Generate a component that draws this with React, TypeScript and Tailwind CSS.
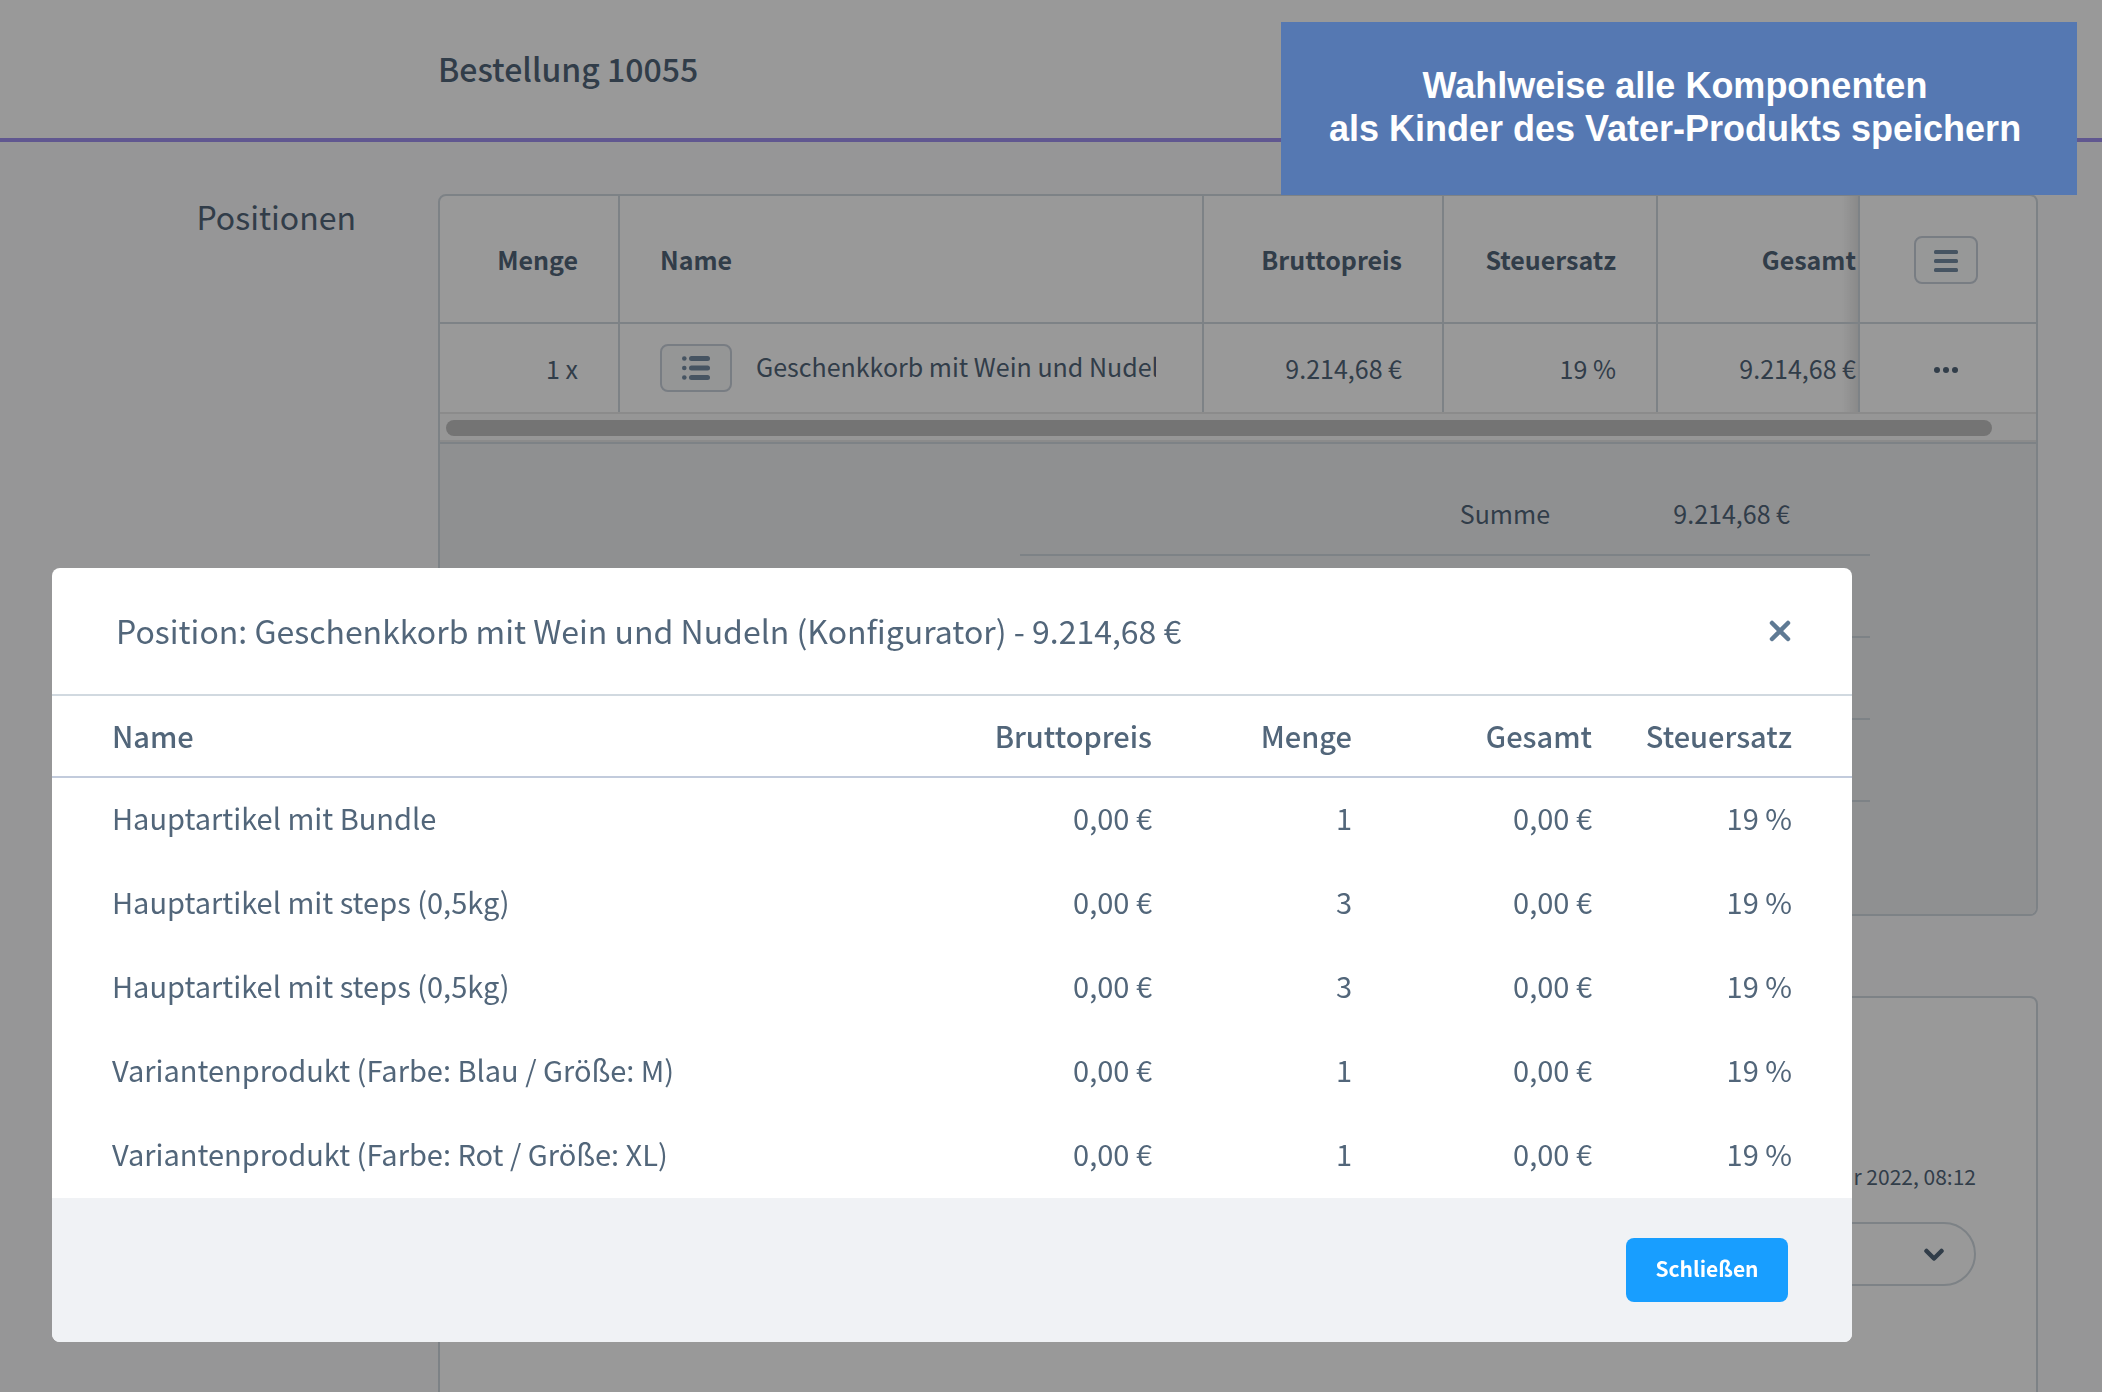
import { ReactNode } from "react";

const positions = [
  { name: "Hauptartikel mit Bundle", price: "0,00 €", quantity: 1, total: "0,00 €", tax: "19 %" },
  { name: "Hauptartikel mit steps (0,5kg)", price: "0,00 €", quantity: 3, total: "0,00 €", tax: "19 %" },
  { name: "Hauptartikel mit steps (0,5kg)", price: "0,00 €", quantity: 3, total: "0,00 €", tax: "19 %" },
  { name: "Variantenprodukt (Farbe: Blau / Größe: M)", price: "0,00 €", quantity: 1, total: "0,00 €", tax: "19 %" },
  { name: "Variantenprodukt (Farbe: Rot / Größe: XL)", price: "0,00 €", quantity: 1, total: "0,00 €", tax: "19 %" },
];

function ListIcon() {
  return (
    <svg width="28" height="24" viewBox="0 0 28 24" fill="#758ca3" aria-hidden="true">
      <circle cx="2.3" cy="2.5" r="2.3" />
      <circle cx="2.3" cy="12" r="2.3" />
      <circle cx="2.3" cy="21.5" r="2.3" />
      <rect x="7" y="0" width="21" height="5" rx="2.5" />
      <rect x="7" y="9.5" width="21" height="5" rx="2.5" />
      <rect x="7" y="19" width="21" height="5" rx="2.5" />
    </svg>
  );
}

function MenuIcon() {
  return (
    <svg width="24" height="22" viewBox="0 0 24 22" fill="#758ca3" aria-hidden="true">
      <rect x="0" y="0" width="24" height="4" rx="1.5" />
      <rect x="0" y="9" width="24" height="4" rx="1.5" />
      <rect x="0" y="18" width="24" height="4" rx="1.5" />
    </svg>
  );
}

function DotsIcon() {
  return (
    <svg width="24" height="6" viewBox="0 0 24 6" fill="#52667a" aria-hidden="true">
      <circle cx="3" cy="3" r="3" />
      <circle cx="12" cy="3" r="3" />
      <circle cx="21" cy="3" r="3" />
    </svg>
  );
}

function Header() {
  return (
    <header className="flex h-[142px] items-center border-b-4 border-[#a092f0] bg-white pb-0.5 pl-[438px]">
      <h1 className="text-[32px] leading-[48px] font-medium">Bestellung 10055</h1>
    </header>
  );
}

function Section({ title, children }: { title?: string; children: ReactNode }) {
  return (
    <section className="flex pr-16">
      <h2 className="w-[438px] shrink-0 pr-[82px] text-right text-[32px] leading-[44px]">{title}</h2>
      <div className="min-w-0 flex-1 overflow-hidden rounded-lg border-2 border-[#d1d9e0] bg-white">
        {children}
      </div>
    </section>
  );
}

function LineItems() {
  return (
    <div>
      <table className="w-full table-fixed border-separate border-spacing-0 text-right text-[25px] leading-9">
        <colgroup>
          <col className="w-[180px]" />
          <col />
          <col className="w-[240px]" />
          <col className="w-[214px]" />
          <col className="w-[202px]" />
          <col className="w-[176px]" />
        </colgroup>
        <thead>
          <tr className="h-32 [&>th]:border-b-2 [&>th]:border-[#d1d9e0]">
            <th className="border-r-2 pr-10 font-bold">Menge</th>
            <th className="border-r-2 pl-10 text-left font-bold">Name</th>
            <th className="border-r-2 pr-10 font-bold">Bruttopreis</th>
            <th className="border-r-2 pr-10 font-bold">Steuersatz</th>
            <th className="border-r-2 bg-linear-to-l from-black/10 to-transparent to-8% pr-0.5 font-bold">Gesamt</th>
            <th className="pt-0.5 pr-1 text-center">
              <button
                aria-label="Spalten"
                className="inline-flex h-12 w-16 items-center justify-center rounded-lg border-2 border-[#c9d0da] bg-[#fcfdfe] pt-0.5 align-middle"
              >
                <MenuIcon />
              </button>
            </th>
          </tr>
        </thead>
        <tbody>
          <tr className="h-[88px] [&>td]:border-[#d1d9e0]">
            <td className="border-r-2 pr-10">1 x</td>
            <td className="border-r-2 pr-[46px] pl-10">
              <div className="flex items-center gap-6">
                <button
                  aria-label="Positionen anzeigen"
                  className="flex h-12 w-[72px] shrink-0 items-center justify-center rounded-lg border-2 border-[#c9d0da] bg-[#f9fafb]"
                >
                  <ListIcon />
                </button>
                <span className="overflow-hidden pb-1 whitespace-nowrap">Geschenkkorb mit Wein und Nudeln</span>
              </div>
            </td>
            <td className="border-r-2 pr-10">9.214,68 €</td>
            <td className="border-r-2 pr-10">19 %</td>
            <td className="border-r-2 bg-linear-to-l from-black/10 to-transparent to-8% pr-0.5">9.214,68 €</td>
            <td className="pr-1 pb-1 text-center">
              <button aria-label="Aktionen" className="inline-flex p-2 align-middle">
                <DotsIcon />
              </button>
            </td>
          </tr>
        </tbody>
      </table>
      <div className="border-t-2 border-b-2 border-[#e8e8e8] bg-[#fafafa] pt-1.5 pr-11 pb-1 pl-1.5">
        <div className="h-4 rounded-full bg-[#c1c1c1]" />
      </div>
    </div>
  );
}

function Summary() {
  return (
    <div className="border-t-2 border-[#d1d9e0] bg-[#eef0f2] py-[30px] pr-[166px]">
      <dl className="ml-auto w-[850px] text-right text-[25px] leading-9">
        <div className="flex h-[82px] items-center border-b-2 border-[#d1d9e0] pr-20 pb-0.5">
          <dt className="flex-1">Summe</dt>
          <dd className="w-60">9.214,68 €</dd>
        </div>
        <div className="h-[82px] border-b-2 border-[#d1d9e0]" />
        <div className="h-[82px] border-b-2 border-[#d1d9e0]" />
        <div className="h-[82px] border-b-2 border-[#d1d9e0]" />
        <div className="h-[82px]" />
      </dl>
    </div>
  );
}

function OrderState() {
  return (
    <div className="flex flex-col items-end px-[60px] pt-[158px] pb-40">
      <p className="text-[21px] leading-10">r 2022, 08:12</p>
      <div className="relative mt-[26px] w-1/3">
        <select
          aria-label="Status"
          className="h-16 w-full appearance-none rounded-full border-2 border-[#d1d9e0] bg-white px-8 text-[21px]"
        />
        <svg
          className="pointer-events-none absolute top-[26px] right-8"
          width="20"
          height="14"
          viewBox="0 0 20 14"
          fill="none"
          stroke="#52667a"
          strokeWidth="4.5"
          strokeLinecap="round"
          strokeLinejoin="round"
          aria-hidden="true"
        >
          <path d="M2.5 3 10 10.5l7.5-7.5" />
        </svg>
      </div>
    </div>
  );
}

function PositionModal() {
  return (
    <div
      role="dialog"
      aria-labelledby="modal-title"
      className="fixed top-[568px] right-[250px] left-[52px] overflow-hidden rounded-lg bg-white"
    >
      <div className="flex h-32 items-center justify-between border-b-2 border-[#d1d9e0] pr-[52px] pl-16">
        <h3 id="modal-title" className="pb-0.5 text-[32px] leading-[48px]">
          Position: Geschenkkorb mit Wein und Nudeln (Konfigurator) - 9.214,68 €
        </h3>
        <button aria-label="Dialog schließen" className="p-2">
          <svg
            width="24"
            height="24"
            viewBox="0 0 24 24"
            stroke="#5f7a94"
            strokeWidth="4.5"
            strokeLinecap="round"
            aria-hidden="true"
          >
            <path d="M4 4l16 16M20 4 4 20" />
          </svg>
        </button>
      </div>
      <table className="w-full table-fixed border-separate border-spacing-0 text-right text-[29px] leading-10">
        <colgroup>
          <col />
          <col className="w-[200px]" />
          <col className="w-[200px]" />
          <col className="w-60" />
          <col className="w-[260px]" />
        </colgroup>
        <thead>
          <tr className="h-[82px] [&>th]:border-b-2 [&>th]:border-[#c2cbdc] [&>th]:pb-0.5 [&>th]:font-medium">
            <th className="pl-[60px] text-left">Name</th>
            <th>Bruttopreis</th>
            <th>Menge</th>
            <th>Gesamt</th>
            <th className="pr-[60px]">Steuersatz</th>
          </tr>
        </thead>
        <tbody>
          {positions.map((position, index) => (
            <tr key={index} className="h-[84px] [&>td]:pb-1.5">
              <td className="pl-[60px] text-left">{position.name}</td>
              <td>{position.price}</td>
              <td>{position.quantity}</td>
              <td>{position.total}</td>
              <td className="pr-[60px]">{position.tax}</td>
            </tr>
          ))}
        </tbody>
      </table>
      <div className="flex justify-end bg-[#f0f2f5] px-16 py-10">
        <button className="h-16 w-[162px] rounded-lg bg-[#189eff] pb-0.5 text-[21px] font-bold text-white">
          Schließen
        </button>
      </div>
    </div>
  );
}

export default function App() {
  return (
    <div className="h-screen overflow-hidden bg-[#fafafc] font-['Noto_Sans_CJK_SC','Noto_Sans',sans-serif] text-[#52667a]">
      <Header />
      <main className="flex flex-col gap-20 pt-[52px]">
        <Section title="Positionen">
          <LineItems />
          <Summary />
        </Section>
        <Section>
          <OrderState />
        </Section>
      </main>
      <div className="fixed inset-0 bg-black/40" />
      <PositionModal />
      <div className="fixed top-[22px] right-[25px] flex h-[173px] w-[796px] items-center justify-center bg-[#5578b2] pr-2 pb-1 text-center font-['Liberation_Sans',Arial,sans-serif] text-[36px] leading-[43px] font-bold text-white">
        <p>
          Wahlweise alle Komponenten
          <br />
          als Kinder des Vater-Produkts speichern
        </p>
      </div>
    </div>
  );
}
